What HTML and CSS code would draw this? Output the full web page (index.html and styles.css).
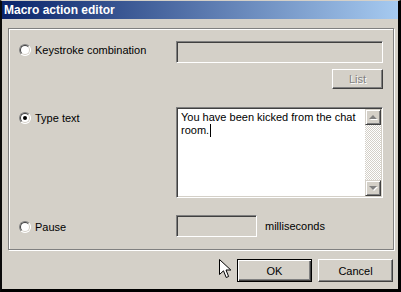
FILE: index.html
```html
<!DOCTYPE html>
<html lang="en">
<head>
    <meta charset="UTF-8">
    <title>Macro action editor</title>
    <link rel="stylesheet" href="styles.css">
</head>
<body>

    <div class="window">
        <div class="titlebar">Macro action editor</div>

        <div class="content">
            <div class="group">
                <div class="row row-keys">
                    <label class="option"><span class="radio"></span>Keystroke combination</label>
                    <div class="field field-keys"></div>
                </div>

                <div class="row row-list">
                    <button class="btn btn-list" disabled>List</button>
                </div>

                <div class="row row-text">
                    <label class="option"><span class="radio checked"></span>Type text</label>
                    <div class="memo">
                        <div class="memo-text">You have been kicked from the chat room.<span class="caret"></span></div>
                        <div class="scrollbar">
                            <div class="sb-btn"><span class="arrow-up"></span></div>
                            <div class="sb-track"></div>
                            <div class="sb-btn"><span class="arrow-down"></span></div>
                        </div>
                    </div>
                </div>

                <div class="row row-pause">
                    <label class="option"><span class="radio"></span>Pause</label>
                    <div class="field field-pause"></div>
                    <span class="unit">milliseconds</span>
                </div>
            </div>

            <div class="actions">
                <button class="btn btn-default">OK</button>
                <button class="btn">Cancel</button>
            </div>
        </div>

        <!-- mouse pointer sitting over the dialog -->
        <svg class="pointer" width="13" height="20" viewBox="0 0 13 20">
            <path d="M0.5 0.5 L0.5 15.5 L4.5 11.8 L7.2 18.5 L9.6 17.5 L7 11 L11.8 11 Z" fill="#fff" stroke="#000" stroke-width="1"/>
        </svg>
    </div>

</body>
</html>
```

FILE: styles.css
```css
body {
    margin: 0;
    background-color: #000;
    font-family: "Liberation Sans", Arial, sans-serif;
    font-size: 11px;
    color: #000;
}
.window {
    position: relative;
    width: 401px;
    height: 292px;
    box-sizing: border-box;
    border-top: 1px solid #d4d0c8;
    border-left: 2px solid #0a0a0a;
    border-right: 3px solid #000;
    border-bottom: 3px solid #000;
    background-color: #d4d0c8;
    display: flex;
    flex-direction: column;
}
.titlebar {
    height: 18px;
    line-height: 18px;
    padding-left: 2px;
    background: linear-gradient(to right, #0a246a, #a6caf0);
    color: #fff;
    font-weight: bold;
    font-size: 12px;
}
.content {
    flex: 1;
    padding: 9px 5px 7px 6px;
    display: flex;
    flex-direction: column;
}
.group {
    width: 386px;
    height: 222px;
    box-sizing: border-box;
    border: 1px solid #808080;
    box-shadow: inset 1px 1px 0 #fff, 1px 1px 0 #fff;
    padding: 12px 10px 12px 10px;
}
.row {
    display: flex;
    align-items: flex-start;
}
.option {
    flex: none;
    width: 157px;
    display: flex;
    align-items: center;
    gap: 4px;
    line-height: 12px;
}
.row-keys .option {
    padding-top: 3px;
}
.row-list {
    margin-top: 6px;
    justify-content: flex-end;
}
.row-text {
    margin-top: 18px;
}
.row-text .option {
    padding-top: 5px;
}
.row-pause {
    margin-top: 17px;
}
.row-pause .option {
    padding-top: 6px;
}
.radio {
    position: relative;
    width: 12px;
    height: 12px;
    box-sizing: border-box;
    border-radius: 50%;
    border: 1px solid;
    border-color: #808080 #fff #fff #808080;
    background-color: #fff;
}
.radio::before {
    content: "";
    position: absolute;
    inset: 0;
    border-radius: 50%;
    border: 1px solid;
    border-color: #404040 #d4d0c8 #d4d0c8 #404040;
}
.radio.checked::after {
    content: "";
    position: absolute;
    left: 3px;
    top: 3px;
    width: 4px;
    height: 4px;
    border-radius: 50%;
    background-color: #000;
}
.field {
    height: 22px;
    box-sizing: border-box;
    border: 1px solid;
    border-color: #808080 #fff #fff #808080;
    box-shadow: inset 1px 1px 0 #404040, inset -1px -1px 0 #d4d0c8;
    background-color: #d4d0c8;
}
.field-keys {
    width: 207px;
}
.field-pause {
    width: 81px;
}
.unit {
    margin-left: 8px;
    line-height: 22px;
}
.btn {
    height: 23px;
    width: 75px;
    box-sizing: border-box;
    padding: 0;
    border: 1px solid;
    border-color: #fff #404040 #404040 #fff;
    box-shadow: inset -1px -1px 0 #808080;
    background-color: #d4d0c8;
    font-family: "Liberation Sans", Arial, sans-serif;
    font-size: 11px;
    color: #000;
}
.btn-default {
    border-color: #000;
    box-shadow: inset 1px 1px 0 #fff, inset -1px -1px 0 #404040, inset -2px -2px 0 #808080;
}
.btn-list {
    width: 51px;
    height: 20px;
    color: #808080;
    text-shadow: 1px 1px 0 #fff;
}
.actions {
    margin-top: 9px;
    display: flex;
    justify-content: flex-end;
    gap: 6px;
}
.memo {
    width: 207px;
    height: 91px;
    box-sizing: border-box;
    border: 1px solid;
    border-color: #808080 #fff #fff #808080;
    box-shadow: inset 1px 1px 0 #404040, inset -1px -1px 0 #d4d0c8;
    background-color: #fff;
    padding: 1px;
    display: flex;
}
.memo-text {
    flex: 1;
    padding: 2px 2px 0 3px;
    line-height: 13px;
}
.caret {
    display: inline-block;
    width: 1px;
    height: 13px;
    margin-left: 1px;
    vertical-align: -3px;
    background-color: #000;
}
.scrollbar {
    width: 16px;
    display: flex;
    flex-direction: column;
}
.sb-btn {
    height: 16px;
    box-sizing: border-box;
    border: 1px solid;
    border-color: #d4d0c8 #404040 #404040 #d4d0c8;
    box-shadow: inset 1px 1px 0 #fff, inset -1px -1px 0 #808080;
    background-color: #d4d0c8;
    display: flex;
    align-items: center;
    justify-content: center;
}
.sb-track {
    flex: 1;
    background-image: conic-gradient(#fff 25%, #d4d0c8 0 50%, #fff 0 75%, #d4d0c8 0);
    background-size: 2px 2px;
}
.arrow-up,
.arrow-down {
    width: 0;
    height: 0;
    border-left: 4px solid transparent;
    border-right: 4px solid transparent;
    filter: drop-shadow(1px 1px 0 #fff);
}
.arrow-up {
    border-bottom: 4px solid #808080;
}
.arrow-down {
    border-top: 4px solid #808080;
}
.pointer {
    position: absolute;
    left: 217px;
    top: 258px;
}
```
